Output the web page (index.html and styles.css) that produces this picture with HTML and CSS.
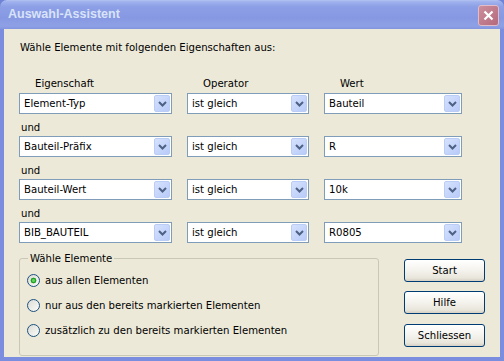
FILE: index.html
```html
<html>
  <head>
    <title>Auswahl-Assistent</title>
    <link rel="stylesheet" href="styles.css">
  </head>
  <body>
    <div class="window">
      <div class="titlebar">
        <span class="title">Auswahl-Assistent</span>
        <span class="close">
          <svg width="11" height="11" viewBox="0 0 11 11"><path d="M1.5 1.5 9.5 9.5 M9.5 1.5 1.5 9.5" stroke="#fff" stroke-width="2.2" fill="none"/></svg>
        </span>
      </div>

      <div class="client">
        <p class="intro">Wähle Elemente mit folgenden Eigenschaften aus:</p>

        <div class="criteria">
          <div class="head">Eigenschaft</div>
          <div class="head">Operator</div>
          <div class="head">Wert</div>

          <div class="combo"><span>Element-Typ</span><span class="drop"><svg width="9" height="6" viewBox="0 0 9 6"><path d="M1 1 4.5 4.5 8 1" stroke="#4d6185" stroke-width="2" fill="none"/></svg></span></div>
          <div class="combo"><span>ist gleich</span><span class="drop"><svg width="9" height="6" viewBox="0 0 9 6"><path d="M1 1 4.5 4.5 8 1" stroke="#4d6185" stroke-width="2" fill="none"/></svg></span></div>
          <div class="combo"><span>Bauteil</span><span class="drop"><svg width="9" height="6" viewBox="0 0 9 6"><path d="M1 1 4.5 4.5 8 1" stroke="#4d6185" stroke-width="2" fill="none"/></svg></span></div>

          <div class="und">und</div>

          <div class="combo"><span>Bauteil-Präfix</span><span class="drop"><svg width="9" height="6" viewBox="0 0 9 6"><path d="M1 1 4.5 4.5 8 1" stroke="#4d6185" stroke-width="2" fill="none"/></svg></span></div>
          <div class="combo"><span>ist gleich</span><span class="drop"><svg width="9" height="6" viewBox="0 0 9 6"><path d="M1 1 4.5 4.5 8 1" stroke="#4d6185" stroke-width="2" fill="none"/></svg></span></div>
          <div class="combo"><span>R</span><span class="drop"><svg width="9" height="6" viewBox="0 0 9 6"><path d="M1 1 4.5 4.5 8 1" stroke="#4d6185" stroke-width="2" fill="none"/></svg></span></div>

          <div class="und">und</div>

          <div class="combo"><span>Bauteil-Wert</span><span class="drop"><svg width="9" height="6" viewBox="0 0 9 6"><path d="M1 1 4.5 4.5 8 1" stroke="#4d6185" stroke-width="2" fill="none"/></svg></span></div>
          <div class="combo"><span>ist gleich</span><span class="drop"><svg width="9" height="6" viewBox="0 0 9 6"><path d="M1 1 4.5 4.5 8 1" stroke="#4d6185" stroke-width="2" fill="none"/></svg></span></div>
          <div class="combo"><span>10k</span><span class="drop"><svg width="9" height="6" viewBox="0 0 9 6"><path d="M1 1 4.5 4.5 8 1" stroke="#4d6185" stroke-width="2" fill="none"/></svg></span></div>

          <div class="und">und</div>

          <div class="combo"><span>BIB_BAUTEIL</span><span class="drop"><svg width="9" height="6" viewBox="0 0 9 6"><path d="M1 1 4.5 4.5 8 1" stroke="#4d6185" stroke-width="2" fill="none"/></svg></span></div>
          <div class="combo"><span>ist gleich</span><span class="drop"><svg width="9" height="6" viewBox="0 0 9 6"><path d="M1 1 4.5 4.5 8 1" stroke="#4d6185" stroke-width="2" fill="none"/></svg></span></div>
          <div class="combo"><span>R0805</span><span class="drop"><svg width="9" height="6" viewBox="0 0 9 6"><path d="M1 1 4.5 4.5 8 1" stroke="#4d6185" stroke-width="2" fill="none"/></svg></span></div>
        </div>

        <div class="bottom">
          <fieldset class="group">
            <legend>Wähle Elemente</legend>
            <div class="radio"><span class="dot checked"></span>aus allen Elementen</div>
            <div class="radio"><span class="dot"></span>nur aus den bereits markierten Elementen</div>
            <div class="radio"><span class="dot"></span>zusätzlich zu den bereits markierten Elementen</div>
          </fieldset>

          <div class="buttons">
            <button class="btn">Start</button>
            <button class="btn">Hilfe</button>
            <button class="btn">Schliessen</button>
          </div>
        </div>
      </div>
    </div>
  </body>
</html>
```

FILE: styles.css
```css
body {
  margin: 0;
  background: #6f82d6;
  font-family: "DejaVu Sans Condensed", "DejaVu Sans", sans-serif;
  font-size: 11.25px;
  color: #000;
}

.window {
  width: 504px;
  height: 361px;
  display: flex;
  flex-direction: column;
}

/* title bar (inactive XP look) */
.titlebar {
  flex: none;
  height: 29px;
  box-sizing: border-box;
  padding: 0 5px 0 8px;
  display: flex;
  align-items: center;
  justify-content: space-between;
  border-radius: 7px 7px 0 0;
  background: linear-gradient(#b3c2f2 0, #9eb0ec 2px, #8c9fe6 7px, #8698e2 18px, #8fa1e5 26px, #8294de 29px);
}

.title {
  font-family: "Liberation Sans", sans-serif;
  font-weight: bold;
  font-size: 12.5px;
  color: #d8e3f8;
  padding-bottom: 1px;
}

.close {
  width: 21px;
  height: 21px;
  box-sizing: border-box;
  border: 1px solid #e2bcc6;
  border-radius: 3px;
  background: linear-gradient(135deg, #cc8e9d, #b46a7c);
  display: flex;
  align-items: center;
  justify-content: center;
  margin-top: 1px;
}

.client {
  flex: 1;
  background: #ece9d8;
  border: 4px solid #7a8ddf;
  border-top: 0;
  padding: 12px 0 0 15px;
}

.intro {
  margin: 0;
  line-height: 13px;
  padding-left: 1px;
}

.criteria {
  display: grid;
  grid-template-columns: 153px 122px 138px;
  column-gap: 15px;
  margin-top: 23px;
}

.head {
  padding-left: 16px;
  line-height: 13px;
  margin-bottom: 3px;
}

.combo {
  height: 21px;
  box-sizing: border-box;
  border: 1px solid #7f9db9;
  background: #fff;
  display: flex;
  align-items: center;
  justify-content: space-between;
  padding: 1px 1px 1px 4px;
}

.drop {
  width: 16px;
  height: 17px;
  box-sizing: border-box;
  border: 1px solid #b9cdf7;
  border-radius: 2px;
  background: linear-gradient(135deg, #d5e1fd, #b8cbf8);
  display: flex;
  align-items: center;
  justify-content: center;
}

.und {
  grid-column: 1 / -1;
  height: 22px;
  box-sizing: border-box;
  padding: 7px 0 0 2px;
  line-height: 13px;
}

.bottom {
  display: flex;
  margin-top: 9px;
}

.group {
  width: 360px;
  box-sizing: border-box;
  margin: 0;
  padding: 3px 7px 4px 7px;
  border: 1px solid #c9c7b6;
  border-radius: 3px;
}

.group legend {
  padding: 0 2px;
  margin-left: 1px;
  line-height: 13px;
}

.radio {
  height: 25px;
  display: flex;
  align-items: center;
  gap: 5px;
}

.dot {
  width: 13px;
  height: 13px;
  box-sizing: border-box;
  border: 1px solid #1c5180;
  border-radius: 50%;
  background: linear-gradient(135deg, #dcdcd6, #fbfbf9);
}

.dot.checked {
  background: radial-gradient(circle, #62d462 0 1px, #21a121 2px, #2a9a2a 2.6px, transparent 3.2px), linear-gradient(135deg, #dcdcd6, #fbfbf9);
}

.buttons {
  margin-left: 25px;
  padding-top: 7px;
  display: flex;
  flex-direction: column;
}

.btn {
  width: 81px;
  height: 23px;
  box-sizing: border-box;
  margin: 0 0 9px 0;
  padding: 0;
  border: 1px solid #003c74;
  border-radius: 3px;
  background: linear-gradient(#ffffff, #f5f4ef 45%, #e9e6db 85%, #d6d0c5);
  font-family: inherit;
  font-size: 11.25px;
  color: #000;
}

.btn + .btn + .btn {
  margin-top: 1px;
}
```
